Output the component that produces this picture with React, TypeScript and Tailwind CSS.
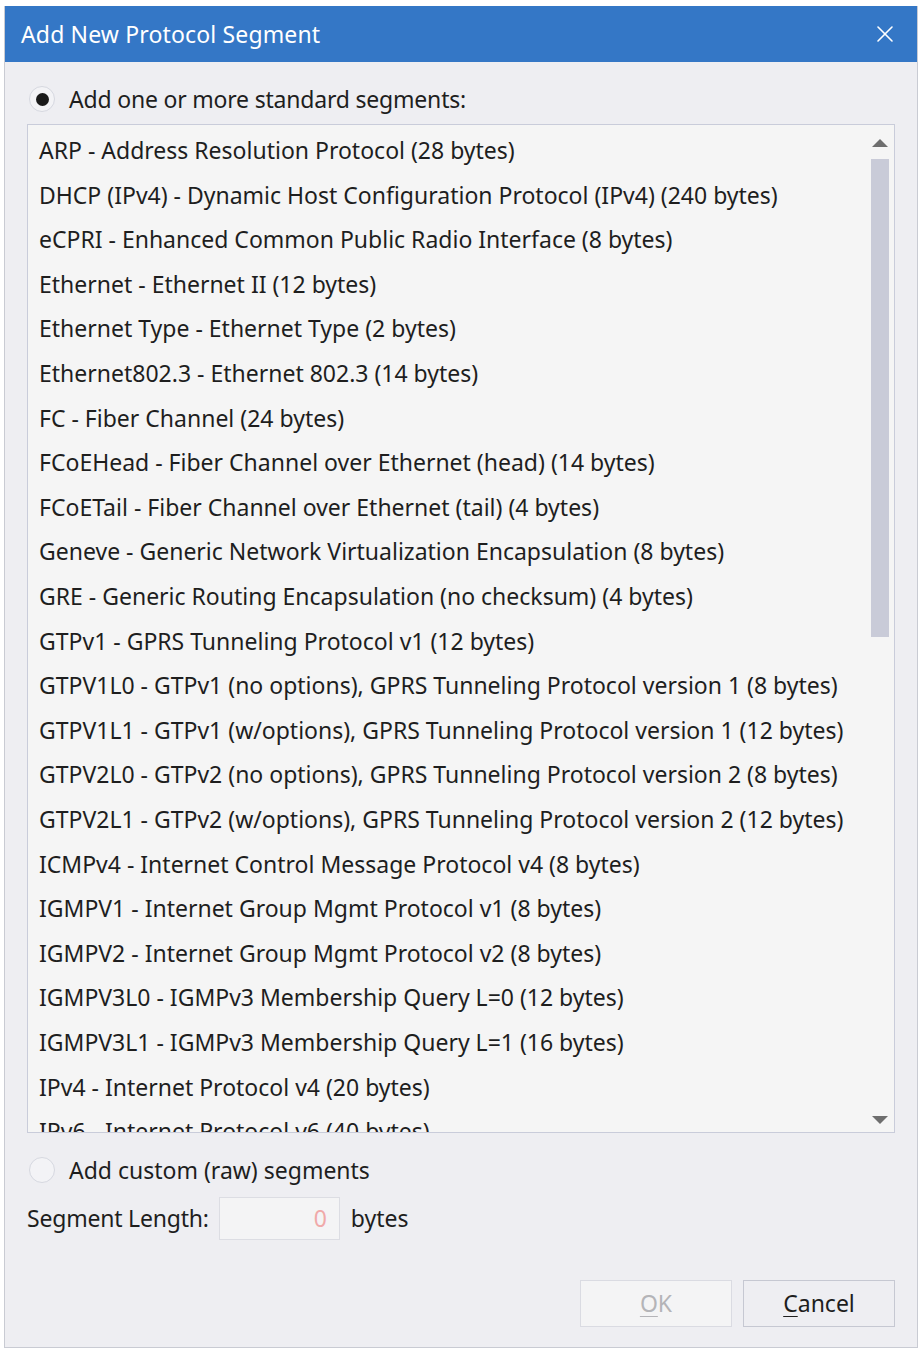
import { X } from "lucide-react";

const segments = [
  "ARP - Address Resolution Protocol (28 bytes)",
  "DHCP (IPv4) - Dynamic Host Configuration Protocol (IPv4) (240 bytes)",
  "eCPRI - Enhanced Common Public Radio Interface (8 bytes)",
  "Ethernet - Ethernet II (12 bytes)",
  "Ethernet Type - Ethernet Type (2 bytes)",
  "Ethernet802.3 - Ethernet 802.3 (14 bytes)",
  "FC - Fiber Channel (24 bytes)",
  "FCoEHead - Fiber Channel over Ethernet (head) (14 bytes)",
  "FCoETail - Fiber Channel over Ethernet (tail) (4 bytes)",
  "Geneve - Generic Network Virtualization Encapsulation (8 bytes)",
  "GRE - Generic Routing Encapsulation (no checksum) (4 bytes)",
  "GTPv1 - GPRS Tunneling Protocol v1 (12 bytes)",
  "GTPV1L0 - GTPv1 (no options), GPRS Tunneling Protocol version 1 (8 bytes)",
  "GTPV1L1 - GTPv1 (w/options), GPRS Tunneling Protocol version 1 (12 bytes)",
  "GTPV2L0 - GTPv2 (no options), GPRS Tunneling Protocol version 2 (8 bytes)",
  "GTPV2L1 - GTPv2 (w/options), GPRS Tunneling Protocol version 2 (12 bytes)",
  "ICMPv4 - Internet Control Message Protocol v4 (8 bytes)",
  "IGMPV1 - Internet Group Mgmt Protocol v1 (8 bytes)",
  "IGMPV2 - Internet Group Mgmt Protocol v2 (8 bytes)",
  "IGMPV3L0 - IGMPv3 Membership Query L=0 (12 bytes)",
  "IGMPV3L1 - IGMPv3 Membership Query L=1 (16 bytes)",
  "IPv4 - Internet Protocol v4 (20 bytes)",
  "IPv6 - Internet Protocol v6 (40 bytes)",
];

function Radio({ checked }: { checked?: boolean }) {
  return (
    <span className="flex h-[26px] w-[26px] items-center justify-center rounded-full border border-[#d6d8e0] bg-[#f3f3f6]">
      {checked && <span className="h-[13px] w-[13px] rounded-full bg-[#1a1a1a]" />}
    </span>
  );
}

export default function App() {
  return (
    <div
      className="min-h-[1352px] w-[922px] bg-white pt-[6px] pl-[4px] text-[#1e1e1e]"
      style={{ fontFamily: '"Noto Sans", "Open Sans", sans-serif' }}
    >
      <div className="flex h-[1342px] w-[914px] flex-col border border-t-0 border-[#c9cbd3] bg-[#eeeef2]">
        <div className="flex h-[56px] items-center justify-between bg-[#3477c6] pl-[16px] pr-[18px] text-white">
          <span className="text-[23px] tracking-[0.15px]">Add New Protocol Segment</span>
          <X size={28} strokeWidth={1.4} />
        </div>

        <div className="flex flex-1 flex-col pl-[22px] pr-[22px]">
          <label className="mt-[21px] flex h-[32px] items-center gap-[14px] pl-[2px] text-[23px] tracking-[-0.2px]">
            <Radio checked />
            <span>Add one or more standard segments:</span>
          </label>

          <div className="mt-[9px] flex h-[1009px] border border-[#c9ccda] bg-[#f5f5f5]">
            <div className="flex-1 overflow-hidden pt-[3px] pl-[11px]">
              {segments.map((s) => (
                <div key={s} className="flex h-[44.6px] items-center whitespace-nowrap text-[23px]">
                  {s}
                </div>
              ))}
            </div>
            <div className="flex w-[28px] flex-col items-center pt-[13px] pb-[7px]">
              <svg width="18" height="10" viewBox="0 0 18 10">
                <path d="M1 9 L9 1 L17 9 Z" fill="#6e6e6e" />
              </svg>
              <div className="mt-[11px] h-[478px] w-[18px] bg-[#c9cbd8]" />
              <div className="flex-1" />
              <svg width="18" height="10" viewBox="0 0 18 10">
                <path d="M1 1 L17 1 L9 9 Z" fill="#6e6e6e" />
              </svg>
            </div>
          </div>

          <label className="mt-[21px] flex h-[32px] items-center gap-[14px] pl-[2px] text-[23px]">
            <Radio />
            <span>Add custom (raw) segments</span>
          </label>

          <div className="mt-[11px] flex items-center text-[23px]">
            <span className="tracking-[-0.2px]">Segment Length:</span>
            <div className="ml-[10px] flex h-[43px] w-[121px] items-center justify-end border border-[#dcdde3] bg-[#f4f4f5] pr-[12px] text-[#f0a9a9]">
              0
            </div>
            <span className="ml-[11px]">bytes</span>
          </div>

          <div className="mt-[40px] flex justify-end gap-[11px]">
            <button className="h-[47px] w-[152px] border border-[#dadbe2] bg-[#f4f4f5] text-[23px] text-[#b4b4b8]">
              <span className="underline decoration-1 underline-offset-[4px]">O</span>K
            </button>
            <button className="h-[47px] w-[152px] border border-[#c6c8d2] bg-[#eeeef2] text-[23px]">
              <span className="underline decoration-1 underline-offset-[4px]">C</span>ancel
            </button>
          </div>
        </div>
      </div>
    </div>
  );
}
